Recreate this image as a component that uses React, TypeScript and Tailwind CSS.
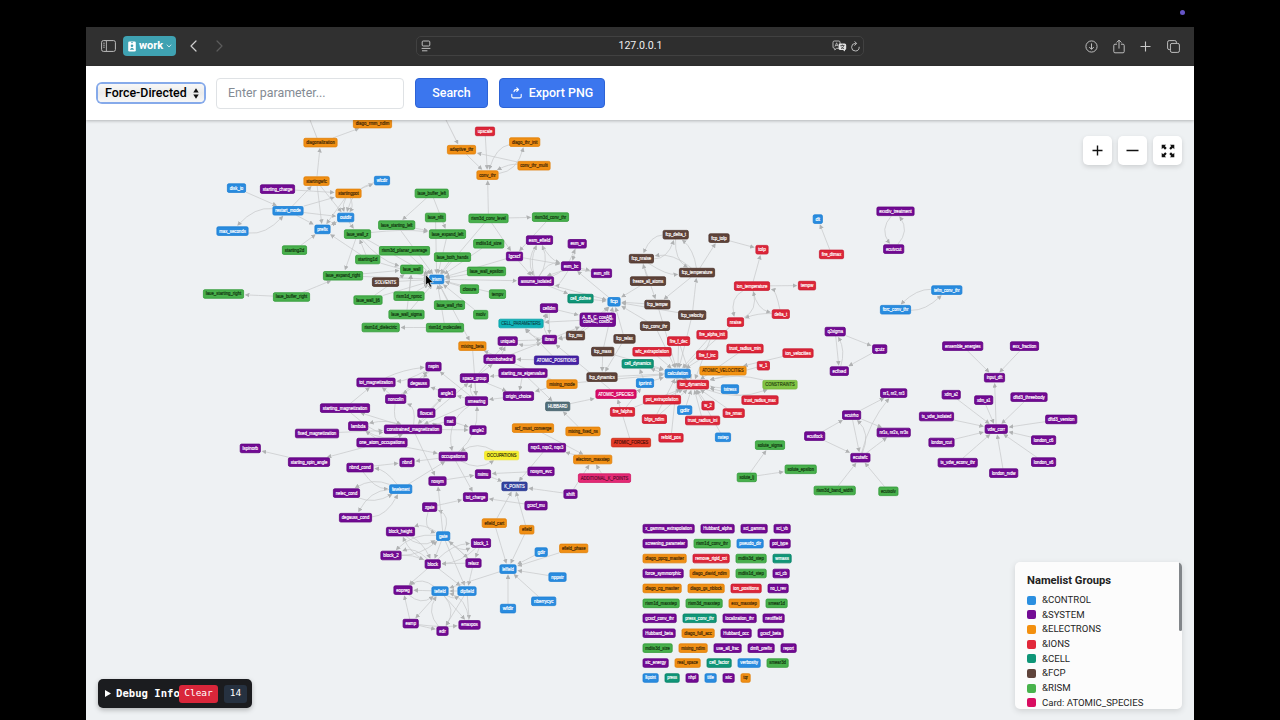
import React from "react";

type GraphNode = { id: string; x: number; y: number; w: number; group: string };

const PALETTE: Record<string, { fill: string; stroke: string; text: string }> = {
  c: { fill: "#2a8cdf", stroke: "#1c7fd3", text: "#ffffff" },
  s: { fill: "#720b93", stroke: "#5f047f", text: "#ffffff" },
  e: { fill: "#f08f14", stroke: "#df7f08", text: "#3f2606" },
  i: { fill: "#dc2639", stroke: "#c81b2e", text: "#ffffff" },
  l: { fill: "#109678", stroke: "#058064", text: "#ffffff" },
  f: { fill: "#5f443b", stroke: "#4b322a", text: "#ffffff" },
  r: { fill: "#48b04c", stroke: "#319a37", text: "#12350f" },
  S: { fill: "#d80c66", stroke: "#c00557", text: "#ffffff" },
  P: { fill: "#4522a5", stroke: "#381790", text: "#ffffff" },
  K: { fill: "#3343a0", stroke: "#28378f", text: "#ffffff" },
  A: { fill: "#e52b76", stroke: "#cf1562", text: "#5a0b2e" },
  C: { fill: "#11b3b8", stroke: "#06a1a8", text: "#0b4d52" },
  O: { fill: "#f7f02c", stroke: "#eee43a", text: "#2e2d08" },
  N: { fill: "#82c545", stroke: "#72b536", text: "#26400f" },
  V: { fill: "#f39212", stroke: "#e08309", text: "#4a2a04" },
  F: { fill: "#e33b27", stroke: "#cb2d1a", text: "#4c0e07" },
  H: { fill: "#526f79", stroke: "#45616b", text: "#ffffff" },
};

const NODE_DATA = `
diago_rmm_ndim 372.5 123.5 39 e
diagonalization 320.5 142.5 34 e
startingwfc 316.5 181 26 e
startingpot 348.5 193.3 26 e
wfcdir 382 180.5 16 c
disk_io 236.5 188 19 c
starting_charge 277.5 189 35 s
restart_mode 288 210.7 31 c
outdir 345.7 217.4 17 c
prefix 322.5 229.3 16 c
max_seconds 232.5 231 32 c
starting2d 294.5 250 25 r
upscale 485 131.3 20 i
diago_thr_init 524.7 142 31 e
adaptive_thr 461.5 149.6 29 e
conv_thr_multi 534 165.6 33 e
conv_thr 487.5 175 22 e
laue_buffer_left 431.7 193.3 34 r
laue_nfit 435.5 217.4 21 r
laue_starting_left 396.7 225 37 r
laue_wall_z 357.5 234 27 r
laue_expand_left 447.5 234 37 r
rism3d_conv_level 488.5 218.3 40 r
rism3d_conv_thr 550.5 217 37 r
rism3d_planar_average 404.5 250.7 51 r
starting1d 367.7 259.4 25 r
laue_both_hands 452.5 257 37 r
mdiis1d_size 488.7 243.7 31 r
laue_wall 411.7 269.3 23 r
laue_expand_right 343 275.7 40 r
SOLVENTS 385.5 282 27 f
trism 436.7 279.3 15 c
laue_wall_epsilon 486.5 271.3 39 r
laue_starting_right 223.5 293.9 41 r
laue_buffer_right 291.5 296.9 37 r
laue_wall_lj6 368 300 29 r
rism1d_nproc 409 296 31 r
laue_wall_rho 449.5 305 31 r
closure 469.5 289 19 r
tempv 497.5 294 17 r
laue_wall_sigma 406.5 314.4 36 r
nsolv 480.7 314.6 15 r
rism1d_dielectric 380.7 327.4 38 r
rism1d_molecules 445 327.6 38 r
lgcscf 514.5 256.3 17 s
esm_efield 539.5 240 27 s
esm_w 577.2 243.7 19 s
esm_bc 571 266 20 s
esm_nfit 601.5 273.2 21 s
assume_isolated 536 281 36 s
cell_dofree 580.5 298.5 26 l
fcp 614 301.7 13 c
celldm 549 308 18 s
CELL_PARAMETERS 521 323.4 45 C
ibrav 549.5 339.5 15 s
uniqueb 507.7 341 20 s
mixing_beta 472.4 346 28 e
rhombohedral 499.5 359 32 s
ATOMIC_POSITIONS 556.5 360.2 45 P
fcp_mu 575.5 335.5 19 f
space_group 474.4 378 29 s
starting_ns_eigenvalue 523 373 49 s
mixing_mode 562 384 31 e
origin_choice 518.5 396 31 s
fcp_mass 602.7 351.5 23 f
fcp_relax 624.5 338.8 22 f
fcp_dynamics 602 377 31 f
HUBBARD 557.7 406.3 25 H
ATOMIC_SPECIES 616 394 41 S
fcp_delta_t 675.7 234.6 26 f
fcp_nraise 641.4 258.6 25 f
fcp_tolp 719 238 21 f
fcp_temperature 697 272.5 36 f
freeze_all_atoms 648 281 36 f
fcp_tempw 657.4 304.5 26 f
fcp_velocity 692.2 315 28 f
fcp_conv_thr 655 326 30 f
tolp 762 249.6 13 i
ion_temperature 752 286 36 i
tempw 807 285.5 18 i
nraise 735.5 322 17 i
delta_t 780.8 314 18 i
fire_f_dec 678.6 341 23 i
fire_alpha_init 712 334.7 31 i
wfc_extrapolation 652 351.7 39 i
fire_f_inc 707.2 355 22 i
trust_radius_min 745 348.5 37 i
ion_velocities 798 353 31 i
cell_dynamics 637.7 363.7 32 l
calculation 677.7 373.4 26 c
ATOMIC_VELOCITIES 723 370.6 47 V
w_1 763.4 365.6 13 i
ion_dynamics 693 384.5 32 i
iprint 645 383 18 c
tstress 730 389 18 c
CONSTRAINTS 780 384.6 35 N
pot_extrapolation 662 399.6 38 i
w_2 708 405.5 13 i
gdir 684.7 410 15 c
trust_radius_max 760 400 37 i
fire_falpha 622.5 411.8 25 i
bfgs_ndim 654.4 419 25 i
trust_radius_ini 702.6 420.4 35 i
fire_nmax 733.7 413 22 i
refold_pos 671 437.7 25 i
nstep 723 437.2 16 c
ATOMIC_FORCES 631 442.5 40 F
scf_must_converge 533 428 42 e
mixing_fixed_ns 583 431.3 35 e
nqx1,_nqx2,_nqx3 547 447.6 38 s
OCCUPATIONS 501.6 455.4 35 O
electron_maxstep 592.7 459.4 39 e
ADDITIONAL_K_POINTS 604.5 478 53 A
nosym_evc 541 471.3 27 s
nsimu 483 474 16 s
K_POINTS 514.5 486.3 26 K
shift 570.5 494 14 s
gcscf_mu 536 505.5 23 s
tot_charge 475.5 497 25 s
nspin 433.5 366.5 16 s
tot_magnetization 376 382.3 39 s
degauss 418.6 383 22 s
angle1 447 393 18 s
noncolin 395.7 399 21 s
smearing 476.5 401 23 s
flovcat 426.4 413 18 s
starting_magnetization 345 408 50 s
lambda 358.2 426 20 s
nat 450 421 12 s
constrained_magnetization 413 429.2 58 s
angle2 478 430 17 s
fixed_magnetization 317 433.4 44 s
one_atom_occupations 382 442.5 51 s
occupations 453.2 456.4 29 s
lspinorb 250.3 448.3 21 s
starting_spin_angle 309 462 42 s
nbnd 407 462.3 15 s
nbnd_cond 360 467.5 27 s
nosym 437.5 481 18 s
nelec_cond 346.5 493 27 s
fwvelement 400.7 489 23 c
degauss_cond 355.5 517.6 33 s
zgate 429.7 507 15 s
block_height 400.5 531.5 29 s
gate 443.2 536 14 c
block_1 481 543 20 s
block_2 391 555.4 21 s
block 432.7 564 16 s
relaxz 473.5 563 16 s
efield_cart 494.3 523 25 e
efield 526.8 529.6 15 e
gdir2 541.2 552 13 c
efield_phase 573.7 548.3 29 e
lelfield 508 569 17 c
nppstr 557.5 577 18 c
nberrycyc 543.7 601.2 25 c
wfdir 508 608.5 16 c
eopreg 403 590 19 s
tefield 440 591 17 c
dipfield 467 591 19 c
eamp 410.7 623.5 16 s
edir 442.5 631 12 s
emaxpos 469.5 624.8 22 s
dt 817.8 219 10 c
fire_dtmax 831.5 254.3 25 i
exxdiv_treatment 895.5 211.2 38 s
ecutvcut 893.7 249 21 s
tefm_conv_thr 946.8 290 31 c
forc_conv_thr 895.5 309.6 31 c
q2sigma 835.2 331.5 21 s
qcutz 879.7 349 15 s
ecfixed 839.3 371 19 s
ensemble_energies 962.7 346 41 s
exx_fraction 1024.5 346 29 s
input_dft 994.5 377.6 21 s
xdm_a2 951.2 394.6 19 s
xdm_a1 983.7 400 19 s
dftd3_threebody 1029 397 37 s
ts_vdw_isolated 936.5 416.4 35 s
vdw_corr 996.2 429 23 s
dftd3_version 1061.2 419.3 32 s
london_rcut 941.5 442.4 26 s
london_c6 1043.6 440 25 s
ts_vdw_econv_thr 957.7 462.6 40 s
london_rvdw 1003.7 473 29 s
london_s6 1043.6 462 25 s
nr1,_nr2,_nr3 893.7 393 27 s
ecutrho 851.6 415 19 s
nr1s,_nr2s,_nr3s 893.7 432.4 34 s
ecutfock 814.7 436 21 s
ecutwfc 860.4 457.6 20 s
rism3d_band_width 834.7 490.4 42 r
ecutsolv 888.4 491.2 20 r
solute_sigma 770 445 30 r
solute_lj 746.8 477.3 20 r
solute_epsilon 800.7 469.2 32 r
`;

const ROWS: string[] = [
  "x_gamma_extrapolation 52 s|Hubbard_alpha 34 s|sci_gamma 27 s|sci_vb 17 s",
  "screening_parameter 45 s|rism1d_conv_thr 37 r|pseudo_dir 27 c|pot_type 21 s",
  "diago_ppcg_maxiter 44 e|remove_rigid_rot 37 i|mdiis3d_step 31 r|wmass 19 l",
  "force_symmorphic 41 s|diago_david_ndim 40 e|mdiis1d_step 31 r|sci_cb 17 s",
  "diago_cg_maxiter 39 e|diago_gs_nblock 37 e|ion_positions 31 i|no_t_rev 21 s",
  "rism1d_maxstep 37 r|rism3d_maxstep 37 r|exx_maxstep 31 e|smear1d 22 r",
  "gcscf_conv_thr 34 s|press_conv_thr 34 l|localization_thr 34 s|nextffield 22 s",
  "Hubbard_beta 33 s|diago_full_acc 33 e|Hubbard_occ 31 s|gcscf_beta 26 s",
  "mdiis3d_size 30 r|mixing_ndim 29 e|use_all_frac 28 s|dmft_prefix 27 s|report 16 s",
  "sic_energy 26 s|real_space 26 e|cell_factor 25 l|verbosity 23 c|smear3d 22 r",
  "lkpoint 16 c|press 15 l|nhpl 13 s|title 12 c|sic 12 s|tqr 10 e",
];

const nodes: GraphNode[] = NODE_DATA.trim()
  .split("\n")
  .map((line) => {
    const [id, x, y, w, group] = line.split(" ");
    return { id, x: +x, y: +y, w: +w, group };
  });

ROWS.forEach((row, r) => {
  let x = 642.6;
  row.split("|").forEach((cell) => {
    const [id, w, group] = cell.split(" ");
    nodes.push({ id, x: x + +w / 2, y: 528.6 + r * 14.93, w: +w, group });
    x += +w + 6;
  });
});

const byId = new Map(nodes.map((n) => [n.id, n]));

const EDGE_DATA = `
diagonalization>diago_rmm_ndim startingwfc>diagonalization starting_charge>startingpot disk_io>restart_mode
max_seconds>restart_mode>-9 restart_mode>max_seconds>-9 restart_mode>startingwfc restart_mode>startingpot restart_mode>outdir
restart_mode>prefix startingwfc>prefix startingwfc>outdir startingpot>outdir>-3 startingpot>outdir>4 startingpot>prefix startingpot>wfcdir
wfcdir>outdir>-9 outdir>prefix prefix>outdir starting2d>prefix starting1d>prefix outdir>laue_wall_z
laue_wall_z>laue_expand_right laue_wall_z>laue_expand_left>3 starting1d>laue_wall_z laue_wall_z>trism laue_wall_z>laue_wall>-6
upscale>conv_thr diago_thr_init>conv_thr>-9 conv_thr>diago_thr_init>-10 conv_thr_multi>conv_thr>-4 conv_thr_multi>adaptive_thr
adaptive_thr>conv_thr rism3d_conv_level>conv_thr rism3d_conv_level>rism3d_conv_thr rism3d_conv_level>lgcscf rism3d_conv_level>trism
rism3d_conv_thr>lgcscf laue_buffer_left>laue_starting_left laue_buffer_left>laue_expand_left laue_starting_left>laue_expand_left laue_starting_left>trism
laue_nfit>trism laue_expand_left>trism laue_both_hands>trism mdiis1d_size>trism laue_wall_epsilon>trism rism3d_planar_average>trism
starting1d>trism laue_wall>trism laue_expand_right>trism laue_expand_right>laue_wall SOLVENTS>trism laue_wall_lj6>trism laue_wall_lj6>laue_wall
rism1d_nproc>trism laue_wall_rho>trism closure>trism tempv>trism laue_wall_sigma>trism nsolv>trism rism1d_molecules>trism
rism1d_molecules>rism1d_dielectric rism1d_nproc>laue_wall laue_wall_sigma>laue_wall laue_buffer_right>laue_expand_right laue_buffer_right>laue_starting_right
trism>assume_isolated lgcscf>assume_isolated lgcscf>esm_bc lgcscf>trism esm_efield>assume_isolated>-7 assume_isolated>esm_efield>-7 assume_isolated>esm_efield>5
esm_efield>esm_bc>-5 esm_w>esm_bc assume_isolated>esm_w>-8 assume_isolated>esm_bc>8 esm_bc>assume_isolated>8 esm_bc>esm_nfit esm_nfit>assume_isolated>-6
assume_isolated>cell_dofree cell_dofree>fcp fcp>esm_bc assume_isolated>fcp
CELL_PARAMETERS>celldm>-9 celldm>ibrav ibrav>celldm>5 celldm>ABC ibrav>ABC ABC>ibrav>5 ABC>CELL_PARAMETERS ibrav>CELL_PARAMETERS>4
ATOMIC_POSITIONS>CELL_PARAMETERS uniqueb>ibrav rhombohedral>ibrav ibrav>uniqueb>4 rhombohedral>uniqueb space_group>rhombohedral space_group>uniqueb
ATOMIC_POSITIONS>rhombohedral fcp_mu>ibrav ABC>fcp fcp_mu>fcp space_group>origin_choice origin_choice>smearing starting_ns_eigenvalue>origin_choice
starting_ns_eigenvalue>HUBBARD starting_ns_eigenvalue>space_group mixing_mode>origin_choice HUBBARD>ATOMIC_SPECIES ATOMIC_SPECIES>ibrav
trism>mixing_beta mixing_beta>smearing mixing_mode>mixing_beta mixing_mode>calculation space_group>smearing smearing>nspin smearing>space_group>4
fcp_mass>fcp_dynamics fcp_relax>fcp_dynamics fcp_relax>fcp fcp_mass>fcp fcp_mass>calculation fcp_dynamics>calculation
fcp_nraise>fcp_delta_t>-9 fcp_delta_t>fcp_nraise>-8 fcp_delta_t>fcp_temperature>-8 fcp_temperature>fcp_delta_t>-5 fcp_nraise>fcp_temperature>-6 fcp_temperature>fcp_nraise>-8
fcp_temperature>fcp_tolp fcp_tolp>tolp fcp_nraise>fcp_tempw freeze_all_atoms>fcp freeze_all_atoms>fcp_nraise fcp_temperature>fcp_tempw fcp_velocity>fcp_temperature
fcp_tempw>fcp fcp_velocity>fcp fcp_conv_thr>fcp fcp_tempw>calculation fcp_conv_thr>calculation fcp_velocity>calculation
ion_temperature>tolp ion_temperature>tempw ion_temperature>delta_t>-8 delta_t>ion_temperature>-8 nraise>ion_temperature>-9 ion_temperature>nraise>-9 delta_t>nraise>-3
nraise>calculation fire_f_dec>calculation fire_f_dec>ion_dynamics fire_alpha_init>calculation fire_alpha_init>ion_dynamics wfc_extrapolation>calculation
fire_f_inc>calculation trust_radius_min>ion_dynamics ion_velocities>ATOMIC_VELOCITIES w_1>ion_dynamics cell_dynamics>calculation iprint>cell_dynamics ion_dynamics>cell_dynamics
ion_dynamics>calculation ion_dynamics>CONSTRAINTS>-10 CONSTRAINTS>ion_dynamics>-7 tstress>ion_dynamics trust_radius_max>ion_dynamics fire_nmax>ion_dynamics w_2>ion_dynamics
pot_extrapolation>ion_dynamics fire_falpha>ion_dynamics bfgs_ndim>ion_dynamics gdir>ion_dynamics trust_radius_ini>ion_dynamics refold_pos>calculation nstep>ion_dynamics
ATOMIC_FORCES>ATOMIC_SPECIES fire_falpha>iprint bfgs_ndim>calculation iprint>calculation mixing_fixed_ns>HUBBARD scf_must_converge>electron_maxstep
ADDITIONAL_K_POINTS>electron_maxstep shift>electron_maxstep electron_maxstep>nqx1,_nqx2,_nqx3 nqx1,_nqx2,_nqx3>K_POINTS shift>K_POINTS nosym_evc>nsimu nsimu>K_POINTS
gcscf_mu>tot_charge efield_cart>K_POINTS efield>K_POINTS occupations>OCCUPATIONS>-9 OCCUPATIONS>occupations>-9 occupations>tot_charge occupations>nbnd
nspin>tot_magnetization>4 tot_magnetization>nspin>3 noncolin>tot_magnetization starting_magnetization>tot_magnetization noncolin>nspin degauss>noncolin angle1>degauss
flovcat>angle1 nspin>degauss smearing>angle1 noncolin>constrained_magnetization>-8 constrained_magnetization>noncolin>-8 starting_magnetization>constrained_magnetization>-9 constrained_magnetization>starting_magnetization
lambda>constrained_magnetization>-9 constrained_magnetization>lambda>-5 fixed_magnetization>constrained_magnetization constrained_magnetization>angle2 angle1>constrained_magnetization nat>constrained_magnetization
nat>angle2 one_atom_occupations>lambda one_atom_occupations>occupations one_atom_occupations>starting_spin_angle starting_spin_angle>lspinorb occupations>smearing>-9 smearing>occupations>-12
smearing>constrained_magnetization constrained_magnetization>nosym constrained_magnetization>space_group nbnd_cond>nbnd nbnd_cond>fwvelement>-7 fwvelement>nbnd_cond>-6 nelec_cond>fwvelement>-8 fwvelement>nelec_cond>-8
degauss_cond>fwvelement>-9 fwvelement>degauss_cond>-9 fwvelement>occupations nosym>nsimu zgate>gate>-9 gate>zgate>-9 gate>nosym zgate>tot_charge
block_height>gate>-9 block_height>block>5 block>block_height>5 gate>block_height>-6 gate>block_1>-8 block_1>block>6 block>block_1>6 gate>block_2>-8 block_2>gate>-6
block>block_2>-8 block_2>block>3 gate>block gate>relaxz relaxz>block relaxz>gate gate>dipfield block>dipfield relaxz>dipfield block>eopreg
block_1>relaxz lelfield>tefield eopreg>tefield>-9 tefield>eopreg tefield>eopreg>-8 dipfield>tefield tefield>eamp eamp>eopreg eamp>emaxpos>-2 eamp>edir
tefield>edir>9 edir>tefield>9 dipfield>edir dipfield>emaxpos tefield>emaxpos emaxpos>tefield>-9 tefield>dipfield>-5
efield_cart>lelfield efield>lelfield gdir2>lelfield efield_phase>lelfield nppstr>lelfield nberrycyc>lelfield wfdir>lelfield
fire_dtmax>dt exxdiv_treatment>ecutvcut>-9 ecutvcut>exxdiv_treatment>-9 forc_conv_thr>tefm_conv_thr>-7 tefm_conv_thr>forc_conv_thr>-7
q2sigma>qcutz q2sigma>ecfixed qcutz>ecfixed ecfixed>q2sigma>-5 ensemble_energies>input_dft exx_fraction>input_dft vdw_corr>input_dft
xdm_a2>vdw_corr xdm_a1>vdw_corr dftd3_threebody>vdw_corr ts_vdw_isolated>vdw_corr dftd3_version>vdw_corr london_rcut>vdw_corr london_c6>vdw_corr
ts_vdw_econv_thr>vdw_corr london_rvdw>vdw_corr london_s6>vdw_corr ecutrho>nr1,_nr2,_nr3 ecutrho>nr1s,_nr2s,_nr3s ecutrho>ecutwfc ecutfock>ecutrho
ecutfock>ecutwfc ecutwfc>ecutrho>-9 ecutwfc>nr1s,_nr2s,_nr3s ecutwfc>nr1,_nr2,_nr3>5 rism3d_band_width>ecutwfc ecutsolv>ecutwfc solute_lj>solute_sigma solute_lj>solute_epsilon
`;

byId.set("ABC", { id: "ABC", x: 597.5, y: 319.5, w: 36, group: "s" });

/** Moves from a node's centre towards (tx, ty) until just outside its box. */
function boundary(n: GraphNode, tx: number, ty: number, gap: number) {
  const dx = tx - n.x;
  const dy = ty - n.y;
  const hh = n.id === "ABC" ? 7 : 4.5;
  const t = Math.min(
    n.w / 2 / Math.max(Math.abs(dx), 0.01),
    hh / Math.max(Math.abs(dy), 0.01)
  );
  const len = Math.hypot(dx, dy) || 1;
  return { x: n.x + dx * t + (dx / len) * gap, y: n.y + dy * t + (dy / len) * gap };
}

function Edge({ spec }: { spec: string }) {
  const [from, to, bend] = spec.split(">");
  const a = byId.get(from);
  const b = byId.get(to);
  if (!a || !b) return null;
  const dx = b.x - a.x;
  const dy = b.y - a.y;
  const len = Math.hypot(dx, dy) || 1;
  const k = -(bend ? +bend : 0) * 1.7;
  const mx = (a.x + b.x) / 2 - (dy / len) * k;
  const my = (a.y + b.y) / 2 + (dx / len) * k;
  const s = boundary(a, mx, my, 0);
  const e = boundary(b, mx, my, 2.4);
  return (
    <path
      d={`M${s.x.toFixed(1)} ${s.y.toFixed(1)}Q${mx.toFixed(1)} ${my.toFixed(1)} ${e.x.toFixed(1)} ${e.y.toFixed(1)}`}
      fill="none"
      stroke="#c6c7c8"
      strokeWidth="0.7"
      markerEnd="url(#arrow)"
    />
  );
}

function Label({ n }: { n: GraphNode }) {
  const c = PALETTE[n.group];
  const caps = n.id.length > 6 && n.id === n.id.toUpperCase();
  return (
    <g>
      <rect x={n.x - n.w / 2 + 0.4} y={n.y - 4.2} width={n.w - 0.8} height={8.6} rx={1.4} fill={c.fill} stroke={c.stroke} strokeWidth="0.8" />
      <text
        x={n.x}
        y={n.y + 1.5}
        textAnchor="middle"
        textLength={n.w - 5.4}
        lengthAdjust="spacingAndGlyphs"
        fontSize={caps ? 5.4 : 4.7}
        fill={c.text}
        stroke={c.text}
        strokeWidth="0.18"
      >
        {n.id === "gdir2" ? "gdir" : n.id.replace(/,_/g, ", ")}
      </text>
    </g>
  );
}

function Graph() {
  return (
    <svg className="block h-full w-full" viewBox="86 120 1108 600" style={{ fontFamily: '"Liberation Sans", Arial, sans-serif' }}>
      <defs>
        <marker id="arrow" viewBox="0 0 6 6" refX="4" refY="3" markerWidth="4.6" markerHeight="4.6" markerUnits="userSpaceOnUse" orient="auto">
          <path d="M0 0L6 3L0 6Z" fill="#b0b2b3" />
        </marker>
      </defs>
      <g fill="none" stroke="#c3c4c5" strokeWidth="0.75">
        <path d="M310 120L317 138" />
        <path d="M446 120L457.5 143" markerEnd="url(#arrow)" />
      </g>
      {EDGE_DATA.trim()
        .split(/\s+/)
        .map((spec) => (
          <Edge key={spec} spec={spec} />
        ))}
      {nodes.map((n) => (
        <Label key={n.id} n={n} />
      ))}
      <g>
        <rect x="580" y="313" width="35.5" height="13.4" rx="2" fill="#720b93" stroke="#5f047f" strokeWidth="0.8" />
        <text x="597.7" y="318.8" textAnchor="middle" fontSize="4.9" fill="#ffffff" stroke="#ffffff" strokeWidth="0.18" textLength="31" lengthAdjust="spacingAndGlyphs">
          A, B, C, cosAB,
        </text>
        <text x="597.7" y="323.4" textAnchor="middle" fontSize="4.9" fill="#ffffff" stroke="#ffffff" strokeWidth="0.18" textLength="29" lengthAdjust="spacingAndGlyphs">
          cosAC, cosBC
        </text>
      </g>
      <path d="M425.6 274.6V285.4L428.1 283.2L429.9 287.2L431.7 286.4L430 282.6H433.2Z" fill="#000" stroke="#fff" strokeWidth="0.6" />
    </svg>
  );
}

const LEGEND: [string, string][] = [
  ["&CONTROL", "bg-[#2b8fe0]"],
  ["&SYSTEM", "bg-[#730c94]"],
  ["&ELECTRONS", "bg-[#f3900f]"],
  ["&IONS", "bg-[#e2283a]"],
  ["&CELL", "bg-[#0f9678]"],
  ["&FCP", "bg-[#5f443b]"],
  ["&RISM", "bg-[#48b34c]"],
  ["Card: ATOMIC_SPECIES", "bg-[#d80c60]"],
];

function BrowserBar() {
  return (
    <div className="flex h-[39px] shrink-0 items-center bg-[#303030] pb-[1px] pl-[15px] pr-[14px] text-[#bdbdbd]">
      <svg className="h-[12px] w-[15px] shrink-0" viewBox="0 0 15 12" fill="none" stroke="currentColor">
        <rect x="0.6" y="0.6" width="13.8" height="10.8" rx="1.8" />
        <path d="M5.4 1V11M2.2 3.2H3.8M2.2 5.2H3.8M2.2 7.2H3.8" strokeWidth="0.9" />
      </svg>
      <div className="ml-[7px] flex h-[20px] w-[53px] shrink-0 items-center rounded-[4px] bg-[#3fa2b2] pl-[5px] text-[11px] font-bold text-white">
        <svg className="mr-[3px] h-[11px] w-[8px] shrink-0" viewBox="0 0 8 11">
          <rect x="0.2" y="0.5" width="7.6" height="10" rx="1.3" fill="#fff" />
          <path d="M3 1.6H5" stroke="#3fa2b2" strokeWidth="0.8" />
          <circle cx="4" cy="4.7" r="1.3" fill="#3fa2b2" />
          <path d="M1.8 8.8Q4 4.6 6.2 8.8Z" fill="#3fa2b2" />
        </svg>
        <span className="w-[23px]">work</span>
        <svg className="ml-[4px] h-[4px] w-[6px] shrink-0" viewBox="0 0 6 4" fill="none" stroke="#d4eef2" strokeWidth="0.9">
          <path d="M0.8 0.7L3 3L5.2 0.7" />
        </svg>
      </div>
      <svg className="ml-[14px] h-[12px] w-[7px] shrink-0" viewBox="0 0 7 12" fill="none" stroke="#cfcfcf" strokeWidth="1.2" strokeLinecap="round" strokeLinejoin="round">
        <path d="M6 1L1 6L6 11" />
      </svg>
      <svg className="ml-[19px] h-[12px] w-[7px] shrink-0" viewBox="0 0 7 12" fill="none" stroke="#5c5c5c" strokeWidth="1.2" strokeLinecap="round" strokeLinejoin="round">
        <path d="M1 1L6 6L1 11" />
      </svg>
      <div className="ml-[193px] flex h-[20px] w-[448px] shrink-0 items-center rounded-[5px] border border-[#414141] bg-[#2e2e2e] pl-[4px] pr-[3px]">
        <svg className="h-[12px] w-[10px]" viewBox="0 0 10 12" fill="none" stroke="currentColor">
          <rect x="1.2" y="1" width="7.6" height="5" rx="1" />
          <path d="M0.6 8.4H9.4M1 10.8H6.4" />
        </svg>
        <div className="flex-1 pl-[18px] text-center text-[10.6px] text-[#eeeeee]">127.0.0.1</div>
        <svg className="h-[12px] w-[15px]" viewBox="0 0 15 12">
          <path d="M2.4 1H6.8Q8 1 8 2.2V7.2Q8 8.3 6.8 8.3H4.6L2.8 10V8.3H2.4Q1 8.3 1 7V2.4Q1 1 2.4 1Z" fill="none" stroke="#c5c5c5" strokeWidth="0.9" />
          <path d="M3 6.6L4.6 2.8L6 6.2M3.5 5.4H5.7" fill="none" stroke="#c5c5c5" strokeWidth="0.8" />
          <path d="M8 3.4H12.6Q14.2 3.4 14.2 5V8.6Q14.2 9.8 13 9.9L12.8 11.6L11 10H8Q6.6 10 6.6 8.6V5Q6.6 3.4 8 3.4Z" fill="#e2e2e2" />
          <path d="M8.4 5.5H12.4M10.4 4.5V5.5M9 8.8Q11.6 7.8 11.8 5.6M9 6.4Q10 8 12 8.8" fill="none" stroke="#303030" strokeWidth="0.7" />
        </svg>
        <svg className="ml-[4px] mt-[1px] h-[11px] w-[9px]" viewBox="0 0 9 11" fill="none" stroke="currentColor" strokeLinecap="round">
          <path d="M5 2.4H4.3A3.8 3.8 0 1 0 8.2 6.2M3.8 0.7L5.7 2.4L3.8 4.3" />
        </svg>
      </div>
      <div className="ml-auto flex shrink-0 items-center">
        <svg className="h-[13px] w-[13px]" viewBox="0 0 13 13" fill="none" stroke="currentColor">
          <circle cx="6.5" cy="6.5" r="5.6" />
          <path d="M6.5 3.4V9.2M4.2 7L6.5 9.4L8.8 7" />
        </svg>
        <svg className="ml-[15px] h-[15px] w-[12px]" viewBox="0 0 12 15" fill="none" stroke="currentColor">
          <path d="M4 5.2H2Q0.8 5.2 0.8 6.4V12.6Q0.8 13.8 2 13.8H10Q11.2 13.8 11.2 12.6V6.4Q11.2 5.2 10 5.2H8M6 9.6V1.2M3.6 3.5L6 1.1L8.4 3.5" />
        </svg>
        <svg className="ml-[15px] h-[11px] w-[11px]" viewBox="0 0 11 11" fill="none" stroke="#c8c8c8" strokeWidth="1.1">
          <path d="M5.5 0.5V10.5M0.5 5.5H10.5" />
        </svg>
        <svg className="ml-[16px] h-[13px] w-[13px]" viewBox="0 0 13 13" fill="none" stroke="currentColor">
          <path d="M3.3 9.6H2.2Q0.6 9.6 0.6 8V2.2Q0.6 0.6 2.2 0.6H7.8Q9.4 0.6 9.4 2.2V3.2" />
          <rect x="3.4" y="3.4" width="9" height="9" rx="1.6" />
        </svg>
      </div>
    </div>
  );
}

function Toolbar() {
  return (
    <div className="relative z-10 flex h-[54px] shrink-0 items-center bg-white pl-[12px] text-[12.4px] shadow-[0_1px_3px_rgba(0,0,0,0.25)]">
      <div className="flex h-[18px] w-[106px] items-center justify-between rounded-[4px] bg-gradient-to-b from-[#f7f7f7] via-[#ececec] to-[#f7f7f7] pl-[7px] pr-[5px] font-medium text-black ring-2 ring-[#86aaea]">
        <span className="whitespace-nowrap">Force-Directed</span>
        <svg className="h-[11px] w-[6px] shrink-0" viewBox="0 0 6 11">
          <path d="M3 0.3L5.7 4.6H0.3ZM3 10.7L0.3 6.4H5.7Z" fill="#111" />
        </svg>
      </div>
      <div className="ml-[12px] flex h-[31px] w-[188px] items-center rounded-[4px] border border-[#dfe2e5] bg-white pl-[11px] text-[#848b94]">
        Enter parameter...
      </div>
      <button className="ml-[11px] h-[30px] w-[73px] rounded-[4px] border border-[#2d63d6] bg-[#3b76ee] font-medium text-white">Search</button>
      <button className="ml-[11px] flex h-[30px] w-[106px] items-center justify-center gap-[7px] rounded-[4px] border border-[#2d63d6] bg-[#3b76ee] font-medium text-white">
        <svg className="h-[12px] w-[11px] shrink-0" viewBox="0 0 11 12" fill="none" stroke="#fff" strokeWidth="1.1" strokeLinecap="round" strokeLinejoin="round">
          <path d="M0.8 7.4V9.4Q0.8 10.9 2.3 10.9H8.7Q10.2 10.9 10.2 9.4V7.4M3 4.6Q3.2 2.6 5.2 2.6H7.2M5.8 0.9L7.6 2.6L5.8 4.3" />
        </svg>
        <span className="whitespace-nowrap">Export PNG</span>
      </button>
    </div>
  );
}

function ZoomControls() {
  const btn = "flex h-[29px] w-[29px] items-center justify-center rounded-[5px] bg-white shadow-[0_2px_5px_rgba(0,0,0,0.14)]";
  return (
    <div className="absolute right-[12px] top-[16px] flex gap-[6px]">
      <button className={btn}>
        <svg className="h-[11px] w-[11px]" viewBox="0 0 11 11" stroke="#111" strokeWidth="1.4">
          <path d="M5.5 0.5V10.5M0.5 5.5H10.5" />
        </svg>
      </button>
      <button className={btn}>
        <svg className="h-[11px] w-[13px]" viewBox="0 0 13 11" stroke="#111" strokeWidth="1.5">
          <path d="M0.5 5.5H12.5" />
        </svg>
      </button>
      <button className={btn}>
        <svg className="h-[14px] w-[14px]" viewBox="0 0 14 14">
          <path d="M0.7 0.7H5.2L3.8 2.1L5.7 4L4 5.7L2.1 3.8L0.7 5.2ZM13.3 0.7V5.2L11.9 3.8L9.8 5.7L8.3 4.2L10.2 2.1L8.8 0.7ZM0.7 13.3V8.8L2.1 10.2L4.2 8.3L5.7 9.8L3.8 11.9L5.2 13.3ZM13.3 13.3H8.8L10.2 11.9L8.3 10L10 8.3L11.9 10.2L13.3 8.8Z" fill="#111" />
        </svg>
      </button>
    </div>
  );
}

export default function App() {
  return (
    <div className="flex h-[720px] w-[1280px] flex-col overflow-hidden bg-black" style={{ fontFamily: 'Roboto, "Liberation Sans", sans-serif' }}>
      <div className="flex h-[27px] shrink-0 justify-end pr-[95px] pt-[10px]">
        <div className="h-[5px] w-[5px] rounded-full bg-[#6554c6]" />
      </div>
      <div className="mx-[86px] flex min-h-0 flex-1 flex-col">
        <BrowserBar />
        <Toolbar />
        <div className="relative min-h-0 flex-1 bg-[#eef1f3]">
          <Graph />
          <ZoomControls />
          <div className="absolute bottom-[11px] right-[12px] h-[147px] w-[167px] overflow-hidden rounded-[5px] bg-[#fcfcfc] pl-[12px] pt-[12px] shadow-[0_2px_6px_rgba(0,0,0,0.13)]">
            <div className="text-[11.2px] font-bold leading-[14px] text-[#222222]">Namelist Groups</div>
            <div className="mt-[5px] flex flex-col">
              {LEGEND.map(([label, color]) => (
                <div key={label} className="flex h-[14.65px] items-center whitespace-nowrap text-[9.6px] text-[#252525]">
                  <span className={`mr-[6px] h-[9px] w-[9px] shrink-0 rounded-[2px] ${color}`} />
                  {label}
                </div>
              ))}
            </div>
            <div className="absolute right-0 top-0 h-[69px] w-[3px] rounded-full bg-[#82868a]" />
          </div>
          <div
            className="absolute bottom-[12px] left-[12px] flex h-[29px] w-[154px] items-center rounded-[5px] bg-[#1b1c1f] pl-[7px] text-white shadow-[0_2px_5px_rgba(0,0,0,0.25)]"
            style={{ fontFamily: '"DejaVu Sans Mono", monospace' }}
          >
            <svg className="h-[7px] w-[6px]" viewBox="0 0 6 7">
              <path d="M0 0L6 3.5L0 7Z" fill="#fff" />
            </svg>
            <span className="ml-[5px] w-[63px] whitespace-nowrap text-[10.6px] font-bold">Debug Info</span>
            <span className="flex h-[18px] w-[39px] items-center justify-center rounded-[3px] bg-[#d9263a] text-[9.5px]">Clear</span>
            <span className="ml-[6px] flex h-[18px] w-[23px] items-center justify-center rounded-[3px] bg-[#263140] text-[9.5px]">14</span>
          </div>
        </div>
      </div>
    </div>
  );
}
